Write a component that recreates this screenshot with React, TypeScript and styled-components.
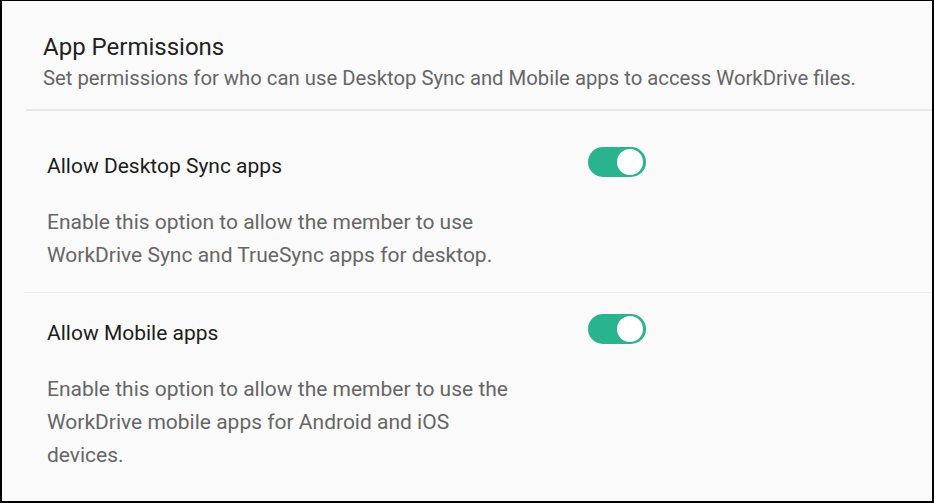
import React, { useState } from "react";
import styled, { createGlobalStyle } from "styled-components";

const GlobalStyle = createGlobalStyle`
  html, body { margin: 0; padding: 0; background: #ffffff; }
  body { font-family: Roboto, "Noto Sans", "Liberation Sans", sans-serif; }
  * { box-sizing: border-box; }
`;

const Frame = styled.div`
  width: 934px;
  height: 503px;
  background: #fafafa;
  border-style: solid;
  border-color: #000;
  border-width: 1px 2px 2px 2px;
  overflow: hidden;
`;

const Header = styled.header`
  margin-left: 24px;
  padding: 32px 0 19px 17px;
  border-bottom: 2px solid #e8e8e8;
`;

const Heading = styled.h1`
  margin: 0;
  font-size: 24px;
  line-height: 28px;
  font-weight: 400;
  color: #222;
`;

const Subtitle = styled.p`
  margin: 5px 0 0;
  font-size: 20.3px;
  line-height: 24px;
  color: #666;
`;

const List = styled.div`
  padding-top: 15px;
`;

const Row = styled.section<{ $last?: boolean }>`
  margin-left: 22px;
  padding: 21px 0 20px 23px;
  border-bottom: ${(p) => (p.$last ? "none" : "1px solid #eeeeee")};
`;

const TitleRow = styled.div`
  display: grid;
  grid-template-columns: 541px auto;
  align-items: start;
`;

const Title = styled.h2`
  margin: 0;
  padding-top: 7px;
  font-size: 21px;
  line-height: 24px;
  font-weight: 400;
  color: #1c1c1c;
`;

const Desc = styled.p`
  margin: 28px 0 0;
  max-width: 470px;
  font-size: 21px;
  line-height: 33px;
  color: #666;
`;

const Track = styled.button<{ $on: boolean }>`
  position: relative;
  width: 58px;
  height: 30px;
  padding: 0;
  border: none;
  border-radius: 15px;
  background: ${(p) => (p.$on ? "#29b38e" : "#c9c9c9")};
  cursor: pointer;
`;

const Knob = styled.span<{ $on: boolean }>`
  position: absolute;
  top: 2px;
  left: ${(p) => (p.$on ? "29px" : "2px")};
  width: 26px;
  height: 26px;
  border-radius: 50%;
  background: #fff;
  transition: left 0.15s;
`;

function Toggle({ initial }: { initial: boolean }) {
  const [on, setOn] = useState(initial);
  return (
    <Track $on={on} onClick={() => setOn(!on)} aria-pressed={on}>
      <Knob $on={on} />
    </Track>
  );
}

const items = [
  {
    title: "Allow Desktop Sync apps",
    desc: "Enable this option to allow the member to use WorkDrive Sync and TrueSync apps for desktop.",
  },
  {
    title: "Allow Mobile apps",
    desc: "Enable this option to allow the member to use the WorkDrive mobile apps for Android and iOS devices.",
  },
];

export default function App() {
  return (
    <>
      <GlobalStyle />
      <Frame>
        <Header>
          <Heading>App Permissions</Heading>
          <Subtitle>
            Set permissions for who can use Desktop Sync and Mobile apps to access WorkDrive files.
          </Subtitle>
        </Header>
        <List>
          {items.map((it, i) => (
            <Row key={it.title} $last={i === items.length - 1}>
              <TitleRow>
                <Title>{it.title}</Title>
                <Toggle initial={true} />
              </TitleRow>
              <Desc>{it.desc}</Desc>
            </Row>
          ))}
        </List>
      </Frame>
    </>
  );
}
